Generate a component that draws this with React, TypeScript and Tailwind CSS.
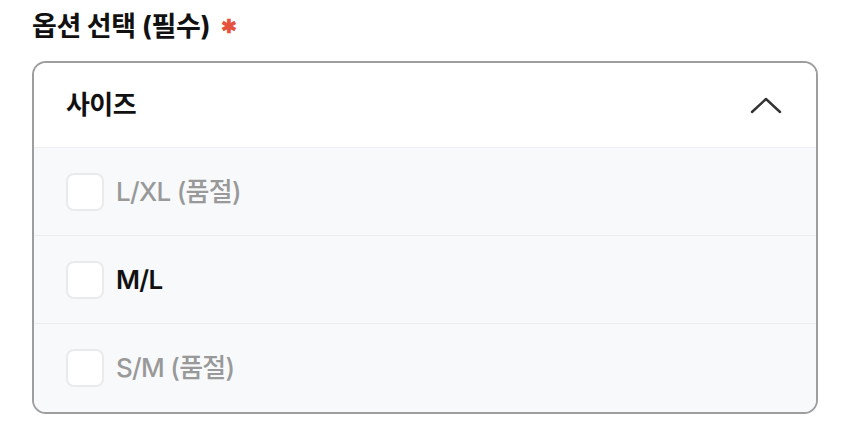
import React from "react";

const font = { fontFamily: 'Inter, "Noto Sans CJK KR", "Noto Sans", sans-serif' };

function Row({ label, disabled, last }: { label: string; disabled?: boolean; last?: boolean }) {
  return (
    <div className={`flex items-center h-[88px] pl-[32px] ${last ? "" : "border-b border-[#eceef1]"}`}>
      <div className="w-[38px] h-[38px] rounded-[8px] border-2 border-[#e9eaec] bg-white" />
      <span
        className={`ml-[12px] text-[26px] leading-none tracking-[-0.7px] ${
          disabled ? "text-[#999999] font-medium" : "text-[#111] font-semibold"
        }`}
      >
        {label}
      </span>
    </div>
  );
}

export default function App() {
  return (
    <div className="w-[850px] h-[446px] bg-white" style={font}>
      <div className="pt-[9px] pl-[32px] flex items-center h-[44px]">
        <span className="text-[27px] leading-none font-bold text-[#111] tracking-[-0.4px]">옵션 선택 (필수)</span>
        <span className="ml-[11px] text-[#e5533d] text-[19px] font-bold leading-none">✱</span>
      </div>
      <div className="mt-[17px] ml-[32px] w-[786px] h-[353px] border-2 border-[#9e9e9e] rounded-[14px] overflow-hidden flex flex-col">
        <div className="h-[85px] shrink-0 flex items-center justify-between pl-[32px] pr-[34px] bg-white border-b border-[#eceef1]">
          <span className="text-[26px] leading-none font-bold text-[#111] tracking-[-0.6px]">사이즈</span>
          <svg width="32" height="18" viewBox="0 0 32 18" fill="none">
            <path d="M2 16 L16 3 L30 16" stroke="#333" strokeWidth="2.4" strokeLinecap="round" strokeLinejoin="round" />
          </svg>
        </div>
        <div className="flex-1 bg-[#f8f9fb] flex flex-col">
          <Row label="L/XL (품절)" disabled />
          <Row label="M/L" />
          <Row label="S/M (품절)" disabled last />
        </div>
      </div>
    </div>
  );
}
